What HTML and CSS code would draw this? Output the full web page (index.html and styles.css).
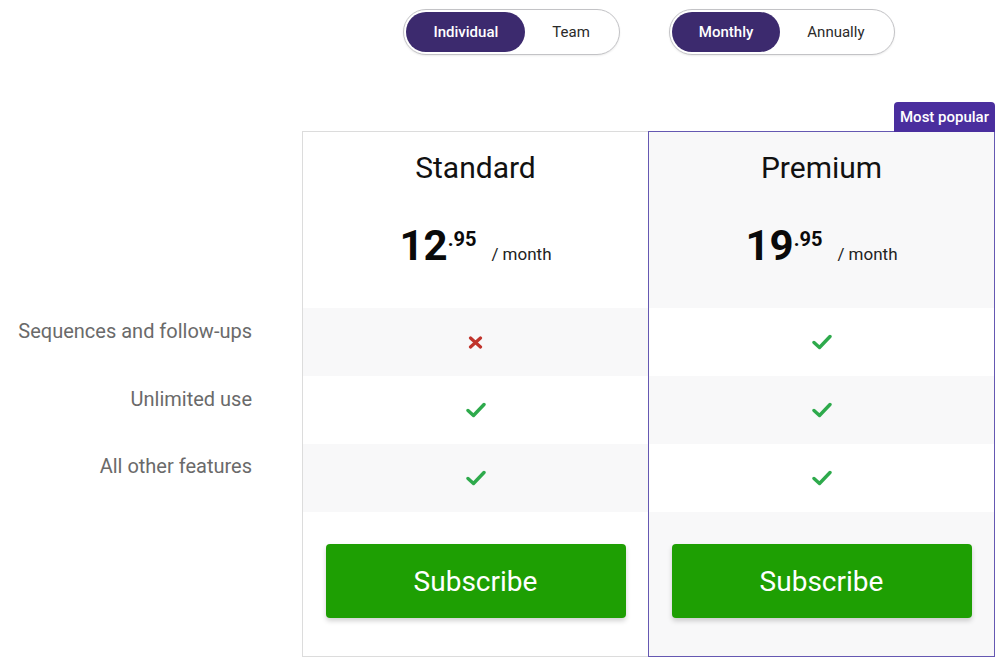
FILE: index.html
```html
<!DOCTYPE html>
<html lang="en">
<head>
<meta charset="utf-8">
<title>Pricing</title>
<link rel="stylesheet" href="styles.css">
</head>
<body>
<div class="page">
  <div class="labels">
    <div class="label">Sequences and follow-ups</div>
    <div class="label">Unlimited use</div>
    <div class="label">All other features</div>
  </div>
  <div class="plans">
    <div class="switches">
      <div class="toggle">
        <button class="opt active">Individual</button>
        <button class="opt">Team</button>
      </div>
      <div class="toggle">
        <button class="opt active">Monthly</button>
        <button class="opt">Annually</button>
      </div>
    </div>
    <div class="cards">
      <div class="card standard">
        <div class="head">
          <div class="name">Standard</div>
          <div class="price"><span class="amount">12</span><span class="cents">.95</span><span class="period">/ month</span></div>
        </div>
        <div class="row shade"><svg class="ico-x" width="15" height="13" viewBox="0 0 15 13"><path d="M2.5 2 L12.5 11 M12.5 2 L2.5 11" stroke="#c0342c" stroke-width="3.2" stroke-linecap="round" fill="none"/></svg></div>
        <div class="row"><svg class="ico-check" width="20" height="16" viewBox="0 0 20 16"><path d="M2 8.5 L7.5 13.5 L18 2.5" stroke="#2eaa4c" stroke-width="3.4" stroke-linecap="round" stroke-linejoin="round" fill="none"/></svg></div>
        <div class="row shade"><svg class="ico-check" width="20" height="16" viewBox="0 0 20 16"><path d="M2 8.5 L7.5 13.5 L18 2.5" stroke="#2eaa4c" stroke-width="3.4" stroke-linecap="round" stroke-linejoin="round" fill="none"/></svg></div>
        <div class="foot"><button class="subscribe">Subscribe</button></div>
      </div>
      <div class="card premium">
        <div class="badge">Most popular</div>
        <div class="head shade">
          <div class="name">Premium</div>
          <div class="price"><span class="amount">19</span><span class="cents">.95</span><span class="period">/ month</span></div>
        </div>
        <div class="row"><svg class="ico-check" width="20" height="16" viewBox="0 0 20 16"><path d="M2 8.5 L7.5 13.5 L18 2.5" stroke="#2eaa4c" stroke-width="3.4" stroke-linecap="round" stroke-linejoin="round" fill="none"/></svg></div>
        <div class="row shade"><svg class="ico-check" width="20" height="16" viewBox="0 0 20 16"><path d="M2 8.5 L7.5 13.5 L18 2.5" stroke="#2eaa4c" stroke-width="3.4" stroke-linecap="round" stroke-linejoin="round" fill="none"/></svg></div>
        <div class="row"><svg class="ico-check" width="20" height="16" viewBox="0 0 20 16"><path d="M2 8.5 L7.5 13.5 L18 2.5" stroke="#2eaa4c" stroke-width="3.4" stroke-linecap="round" stroke-linejoin="round" fill="none"/></svg></div>
        <div class="foot shade"><button class="subscribe">Subscribe</button></div>
      </div>
    </div>
  </div>
</div>
</body>
</html>
```
FILE: styles.css
```css
* { box-sizing: border-box; }
html, body { margin: 0; padding: 0; background: #fff; }
body {
  font-family: Roboto, "Liberation Sans", Arial, sans-serif;
  color: #111;
  width: 996px;
  height: 658px;
  overflow: hidden;
}
.page {
  display: flex;
  align-items: flex-start;
}
.labels {
  width: 302px;
  flex: none;
  padding-top: 308px;
  padding-right: 50px;
  display: flex;
  flex-direction: column;
}
.label {
  height: 68px;
  padding-top: 11px;
  text-align: right;
  font-size: 20px;
  line-height: 24px;
  color: #6a6a6a;
}
.label + .label { margin-top: -0.5px; }
.plans {
  flex: 1;
  display: flex;
  flex-direction: column;
}
.switches {
  display: flex;
  justify-content: center;
  gap: 49px;
  padding-top: 9px;
  height: 131px;
}
.toggle {
  display: flex;
  height: 46px;
  padding: 2px;
  border: 1px solid #c3c3c6;
  border-radius: 23px;
  box-shadow: 0 1px 2px rgba(0,0,0,0.08);
  background: #fff;
}
.opt {
  border: none;
  background: transparent;
  font-family: inherit;
  font-size: 15px;
  font-weight: 400;
  color: #2a2a2a;
  padding: 0 27px;
  height: 40px;
  border-radius: 20px;
  cursor: pointer;
}
.opt.active {
  background: #3c2a6e;
  color: #fff;
  font-weight: 500;
}
.cards {
  display: flex;
}
.card {
  display: flex;
  flex-direction: column;
  background: #fff;
}
.standard {
  width: 346px;
  border: 1px solid #dcdcdc;
  border-right: none;
}
.premium {
  width: 347px;
  border: 1px solid #6558b2;
  position: relative;
}
.badge {
  position: absolute;
  right: -1px;
  top: -30px;
  height: 30px;
  padding: 0 6px;
  background: #4a2e9e;
  color: #fff;
  font-size: 15px;
  font-weight: 500;
  line-height: 30px;
  border-radius: 4px 4px 0 0;
}
.shade { background: #f8f8f9; }
.head {
  height: 176px;
  padding-top: 18px;
  display: flex;
  flex-direction: column;
  align-items: center;
}
.name {
  font-size: 30px;
  line-height: 36px;
  color: #111;
}
.price {
  margin-top: 28px;
  line-height: 50px;
  white-space: nowrap;
}
.amount {
  font-size: 42px;
  font-weight: 700;
  color: #0a0a0a;
}
.cents {
  font-size: 20px;
  font-weight: 700;
  vertical-align: 14px;
  color: #0a0a0a;
}
.period {
  font-size: 17px;
  color: #222;
  margin-left: 15px;
}
.row {
  height: 68px;
  display: flex;
  align-items: center;
  justify-content: center;
}
.foot {
  height: 144px;
  padding-top: 32px;
  display: flex;
  justify-content: center;
  align-items: flex-start;
}
.subscribe {
  width: 300px;
  height: 74px;
  border: none;
  border-radius: 4px;
  background: #1e9f03;
  color: #fff;
  font-family: inherit;
  font-size: 28px;
  font-weight: 400;
  box-shadow: 0 3px 5px rgba(0,0,0,0.18);
  cursor: pointer;
}
```
